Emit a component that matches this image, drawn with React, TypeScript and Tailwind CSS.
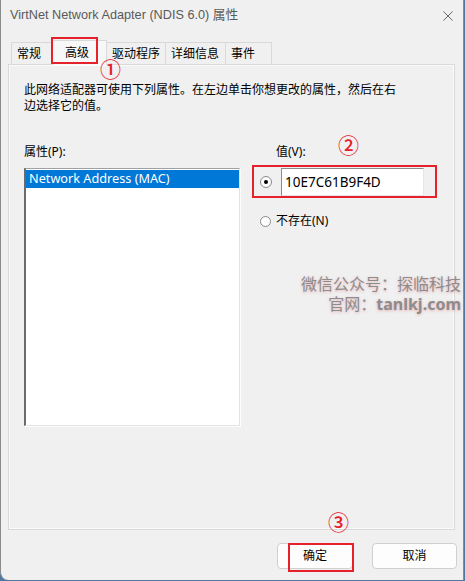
export default function App() {
  return (
    <div className="w-[465px] h-[581px] bg-[#4f7aa0] overflow-hidden font-['Noto_Sans','Noto_Sans_CJK_SC',sans-serif] text-black">
      <div className="relative w-[464px] h-[580px] bg-[#f0f0f0] border-x border-[#8c8c8c] rounded-bl-[8px] flex flex-col">
        {/* Title bar */}
        <div className="h-[31px] flex items-center justify-between pl-[9px] pr-[10px] text-[12.7px] text-[#5a5a5a] font-['Liberation_Sans','Noto_Sans_CJK_SC',sans-serif]">
          <span>VirtNet Network Adapter (NDIS 6.0) 属性</span>
          <svg width="10" height="10" viewBox="0 0 10 10" className="text-[#6a6a6a]">
            <path d="M0.5 0.5L9.5 9.5M9.5 0.5L0.5 9.5" stroke="currentColor" strokeWidth="1" />
          </svg>
        </div>

        {/* Tabs */}
        <div className="flex items-end h-[33px] pl-[10px] text-[12px]">
          <div className="w-[41px] h-[22px] pl-[5px] flex items-center border border-b-0 border-[#d9d9d9] bg-[#f0f0f0]">常规</div>
          <div className="relative z-10 -mb-px w-[55px] h-[25px] pl-[12px] flex items-center border border-b-0 border-[#d9d9d9] bg-[#f7f7f7]">高级</div>
          <div className="w-[59px] h-[22px] pl-[5px] flex items-center border border-l-0 border-b-0 border-[#d9d9d9] bg-[#f0f0f0]">驱动程序</div>
          <div className="w-[60px] h-[22px] pl-[5px] flex items-center border border-l-0 border-b-0 border-[#d9d9d9] bg-[#f0f0f0]">详细信息</div>
          <div className="w-[46px] h-[22px] pl-[5px] flex items-center border border-l-0 border-b-0 border-[#d9d9d9] bg-[#f0f0f0]">事件</div>
        </div>

        {/* Panel */}
        <div className="ml-[7px] w-[447px] h-[466px] border border-[#d9d9d9] bg-[#f0f0f0] shadow-[inset_1px_1px_0_#fbfbfb,inset_-1px_-1px_0_#fbfbfb] pt-[17px] pl-[15px] text-[12px]">
          <p className="w-[376px] leading-[16px]">
            此网络适配器可使用下列属性。在左边单击你想更改的属性，然后在右边选择它的值。
          </p>

          <div className="flex mt-[30px]">
            {/* Property list */}
            <div className="w-[216px]">
              <div className="leading-[16px]">属性(P):</div>
              <div className="mt-[8px] h-[258px] bg-white border-t border-t-[#a0a0a0] border-l-2 border-l-[#6a6a6a] border-r border-b border-r-[#e3e3e3] border-b-[#e3e3e3] shadow-[1px_1px_0_#fdfdfd] pt-px">
                <div className="h-[18px] bg-[#0078d7] text-white pl-[3px] flex items-center text-[12.7px]">Network Address (MAC)</div>
              </div>
            </div>

            {/* Value */}
            <div className="ml-[20px] flex flex-col">
              <div className="leading-[16px] pl-[16px]">值(V):</div>
              <div className="mt-[8px] flex items-center">
                <span className="w-[12px] h-[12px] rounded-full border border-[#8a8a8a] bg-white flex items-center justify-center">
                  <span className="w-[4px] h-[4px] rounded-full bg-black" />
                </span>
                <div className="ml-[9px] w-[143px] h-[28px] bg-white border-t border-l border-t-[#8a8a8a] border-l-[#8a8a8a] border-r border-b border-r-[#e6e6e6] border-b-[#e6e6e6] pl-[3px] flex items-center text-[13.5px]">
                  10E7C61B9F4D
                </div>
              </div>
              <div className="mt-[16px] flex items-center">
                <span className="w-[11px] h-[11px] rounded-full border border-[#8a8a8a] bg-white" />
                <span className="ml-[5px]">不存在(N)</span>
              </div>
            </div>
          </div>
        </div>

        {/* Buttons */}
        <div className="mt-[13px] flex justify-end pr-[6px] gap-[19px] text-[12px]">
          <button className="w-[76px] h-[26px] rounded-[4px] border border-[#d0d0d0] bg-[#fdfdfd]">确定</button>
          <button className="w-[85px] h-[26px] rounded-[4px] border border-[#d0d0d0] bg-[#fdfdfd]">取消</button>
        </div>

        {/* Watermark */}
        <div className="absolute z-20 right-[2px] top-[274px] text-right text-[16px] leading-[20px] text-[#8c8c8c] [text-shadow:0_1px_3px_rgba(220,90,100,0.45)]">
          <div>微信公众号：探临科技</div>
          <div>
            官网：<span className="font-bold">tanlkj.com</span>
          </div>
        </div>

        {/* Annotations */}
        <div className="absolute z-20 left-[50px] top-[37px] w-[47px] h-[27px] border-2 border-[#e5222b]" />
        <span className="absolute z-20 left-[99px] top-[59px] text-[21px] leading-[18px] font-medium text-[#e5222b] font-['Noto_Sans_CJK_SC',sans-serif]">①</span>
        <div className="absolute z-20 left-[251px] top-[165px] w-[185px] h-[33px] border-2 border-[#e5222b]" />
        <span className="absolute z-20 left-[337px] top-[135px] text-[21px] leading-[18px] font-medium text-[#e5222b] font-['Noto_Sans_CJK_SC',sans-serif]">②</span>
        <div className="absolute z-20 left-[287px] top-[543px] w-[66px] h-[29px] border-2 border-[#e5222b]" />
        <span className="absolute z-20 left-[327px] top-[512px] text-[21px] leading-[18px] font-medium text-[#e5222b] font-['Noto_Sans_CJK_SC',sans-serif]">③</span>
      </div>
    </div>
  );
}
